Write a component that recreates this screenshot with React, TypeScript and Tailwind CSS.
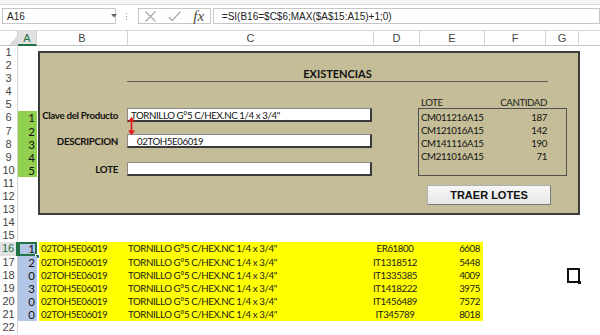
import React from 'react';

const CAL = "font-['Lato',sans-serif]";
const DESC = 'TORNILLO G°5 C/HEX.NC 1/4 x 3/4"';

const data = [
  { a: '1', d: 'ER61800', e: '6608' },
  { a: '2', d: 'IT1318512', e: '5448' },
  { a: '0', d: 'IT1335385', e: '4009' },
  { a: '3', d: 'IT1418222', e: '3975' },
  { a: '0', d: 'IT1456489', e: '7572' },
  { a: '0', d: 'IT345789', e: '8018' },
];

const lotes: [string, string][] = [
  ['CM011216A15', '187'],
  ['CM121016A15', '142'],
  ['CM141116A15', '190'],
  ['CM211016A15', '71'],
];

function FormulaBar() {
  return (
    <div className="flex h-[25px] items-start pt-[3px]">
      <div className="relative ml-[2px] flex h-[16px] w-[118px] items-center border border-[#c6c6c6] bg-white pl-[4px] text-[10px] text-[#222]">
        A16
        <svg className="absolute left-[108px] top-[5px]" width="6" height="4" viewBox="0 0 6 4">
          <polygon points="0,0 6,0 3,3.5" fill="#666" />
        </svg>
      </div>
      <div className="ml-[9px] mt-[5px] flex w-[3px] flex-col items-center gap-[2px]">
        <div className="h-[1px] w-[1px] bg-[#888]" />
        <div className="h-[1px] w-[1px] bg-[#888]" />
        <div className="h-[1px] w-[1px] bg-[#888]" />
      </div>
      <div className="ml-[10px] flex h-[16px] w-[75px] items-center border border-[#c6c6c6] bg-white">
        <svg className="ml-[5px]" width="13" height="11" viewBox="0 0 13 11">
          <path d="M1.5 0.5 L11.5 10.5 M11.5 0.5 L1.5 10.5" stroke="#a6a6a6" strokeWidth="1.1" fill="none" />
        </svg>
        <svg className="ml-[11px]" width="13" height="11" viewBox="0 0 13 11">
          <path d="M0.8 6 L4.2 9.6 L12.2 0.8" stroke="#a6a6a6" strokeWidth="1.3" fill="none" />
        </svg>
        <span className="ml-[12px] font-['Liberation_Serif',serif] text-[15px] italic leading-[14px] text-[#444]">
          fx
        </span>
      </div>
      <div className="ml-[2px] flex h-[16px] w-[400px] items-center border border-[#c6c6c6] bg-white pl-[8px] text-[10px] text-[#222]">
        =SI(B16=$C$6;MAX($A$15:A15)+1;0)
      </div>
    </div>
  );
}

function ColumnHeaders() {
  const hc = 'h-full shrink-0 border-r border-b border-[#d4d4d4] border-b-[#c4c4c4] text-center text-[11px] leading-[14px] text-[#444]';
  return (
    <div className="flex h-[16px] border-t border-[#dadada]">
      <div className="relative h-full w-[18px] shrink-0 border-r border-b border-[#d4d4d4] border-b-[#c4c4c4]">
        <svg className="absolute left-[9px] top-[5px]" width="8" height="9" viewBox="0 0 8 9">
          <polygon points="8,0 8,9 0,9" fill="#dcdcdc" />
        </svg>
      </div>
      <div className="h-full w-[19px] shrink-0 border-r border-b-2 border-[#d4d4d4] border-b-[#217346] bg-[#e1e1e1] text-center text-[11px] leading-[14px] text-[#217346]">
        A
      </div>
      <div className={`${hc} w-[91px]`}>B</div>
      <div className={`${hc} w-[246px]`}>C</div>
      <div className={`${hc} w-[46px]`}>D</div>
      <div className={`${hc} w-[65px]`}>E</div>
      <div className={`${hc} w-[61px]`}>F</div>
      <div className={`${hc} w-[33px]`}>G</div>
      <div className={`${hc} w-[40px]`}></div>
    </div>
  );
}

function Panel() {
  const input = 'flex h-[14px] w-[245px] items-center whitespace-nowrap border-t border-l border-[#8a8a8a] border-r-2 border-b-2 border-r-[#3a3a3a] border-b-[#3a3a3a] bg-white text-[9.7px] leading-[12px] tracking-[-0.4px] text-[#111]';
  const label = 'w-[78px] shrink-0 whitespace-nowrap flex justify-end text-[9.8px] font-bold leading-[12px] tracking-[-0.35px] text-[#111]';
  return (
    <div className={`absolute left-[38px] top-[5px] h-[164px] w-[542px] border-2 border-[#3c3c3c] bg-[#c4bd97] ${CAL}`}>
      <div className="ml-[87px] h-[29px] w-[421px] border-b border-[#5e5e5e] pt-[14px] text-center text-[11px] font-bold leading-[14px] text-[#111]">
        EXISTENCIAS
      </div>
      <div className="flex">
        <div className="relative flex flex-col pt-[26px]">
          <div className="flex items-center gap-[9px]">
            <div className={label}>Clave del Producto</div>
            <div className={`${input} pl-[3px]`}>{DESC}</div>
          </div>
          <div className="mt-[12px] flex items-center gap-[9px]">
            <div className={label}>DESCRIPCION</div>
            <div className={`${input} pl-[9px]`}>02TOH5E06019</div>
          </div>
          <div className="mt-[14px] flex items-center gap-[9px]">
            <div className={label}>LOTE</div>
            <div className={input}></div>
          </div>
          <svg className="absolute left-[88px] top-[35px]" width="7" height="18" viewBox="0 0 7 18">
            <path d="M3.5 3 L3.5 15" stroke="#e8101a" strokeWidth="1.6" />
            <polygon points="3.5,0 7,4.5 0,4.5" fill="#e8101a" />
            <polygon points="3.5,18 7,13.5 0,13.5" fill="#e8101a" />
          </svg>
        </div>
        <div className="ml-[46px] flex w-[149px] flex-col">
          <div className="mt-[14px] flex h-[12px] justify-between pl-[3px] pr-[20px] text-[9.7px] leading-[12px] tracking-[-0.4px] text-[#222]">
            <span>LOTE</span>
            <span>CANTIDAD</span>
          </div>
          <div className="h-[68px] border border-[#505050] pt-[2px]">
            {lotes.map(([l, q]) => (
              <div key={l} className="flex h-[13px] justify-between pl-[2px] pr-[19px] text-[9.7px] leading-[13px] tracking-[-0.4px] text-[#111]">
                <span>{l}</span>
                <span>{q}</span>
              </div>
            ))}
          </div>
          <div className="ml-[9px] mt-[9px] flex h-[20px] w-[124px] items-center justify-center border border-[#b0b0b0] border-r-[#7a7a7a] border-b-[#7a7a7a] bg-gradient-to-b from-[#f7f7f7] to-[#e6e6e6] font-['Liberation_Sans',sans-serif] text-[11px] font-bold text-[#111]">
            TRAER LOTES
          </div>
        </div>
      </div>
    </div>
  );
}

function BodyRow({ r }: { r: number }) {
  const isGreen = r >= 6 && r <= 10;
  const di = r - 16;
  const isData = di >= 0 && di < 6;
  const sel = r === 16;
  return (
    <div className="flex h-[13.1px]">
      <div
        className={
          sel
            ? 'w-[18px] shrink-0 border-r-2 border-[#217346] bg-[#e1e1e1] text-center text-[11px] leading-[13px] text-[#217346]'
            : 'w-[18px] shrink-0 border-r border-[#d4d4d4] text-center text-[11px] leading-[13px] text-[#444]'
        }
      >
        {r}
      </div>
      {isGreen && (
        <div className={`w-[19px] shrink-0 bg-[#92d050] pr-[2px] text-right text-[11.5px] leading-[13px] text-[#111] ${CAL}`}>
          {r - 5}
        </div>
      )}
      {isData && (
        <>
          <div className={`relative w-[19px] shrink-0 bg-[#b4c6e7] pr-[2px] text-right text-[11.5px] leading-[13px] text-[#111] ${CAL}`}>
            {data[di].a}
            {sel && (
              <>
                <div className="absolute inset-0 border-2 border-[#217346]" />
                <div className="absolute bottom-[-3px] right-[-3px] h-[5px] w-[5px] border border-white bg-[#217346]" />
              </>
            )}
          </div>
          <div className={`ml-[2px] flex w-[444px] shrink-0 whitespace-nowrap bg-[#ffff00] text-[9.7px] leading-[13px] tracking-[-0.4px] text-[#1a1a1a] ${CAL}`}>
            <div className="w-[87px] shrink-0 pl-[2px]">02TOH5E06019</div>
            <div className="w-[246px] shrink-0 pl-[2px]">{DESC}</div>
            <div className="w-[46px] shrink-0 text-center">{data[di].d}</div>
            <div className="w-[65px] shrink-0 pr-[3px] text-right">{data[di].e}</div>
          </div>
        </>
      )}
    </div>
  );
}

export default function App() {
  const rows = Array.from({ length: 22 }, (_, i) => i + 1);
  return (
    <div className="relative h-[335px] w-[600px] overflow-hidden bg-white font-['Liberation_Sans',sans-serif]">
      <div className="h-[5px] border-b border-[#d6d6d6] bg-[#f3f3f3]" />
      <FormulaBar />
      <ColumnHeaders />
      <div className="relative">
        {rows.map((r) => (
          <BodyRow key={r} r={r} />
        ))}
        <Panel />
        <div className="absolute left-[567px] top-[222px] h-[15px] w-[13px] border-2 border-[#111]">
          <div className="absolute bottom-[-3px] right-[-3px] h-[3px] w-[3px] bg-[#111]" />
        </div>
      </div>
    </div>
  );
}
